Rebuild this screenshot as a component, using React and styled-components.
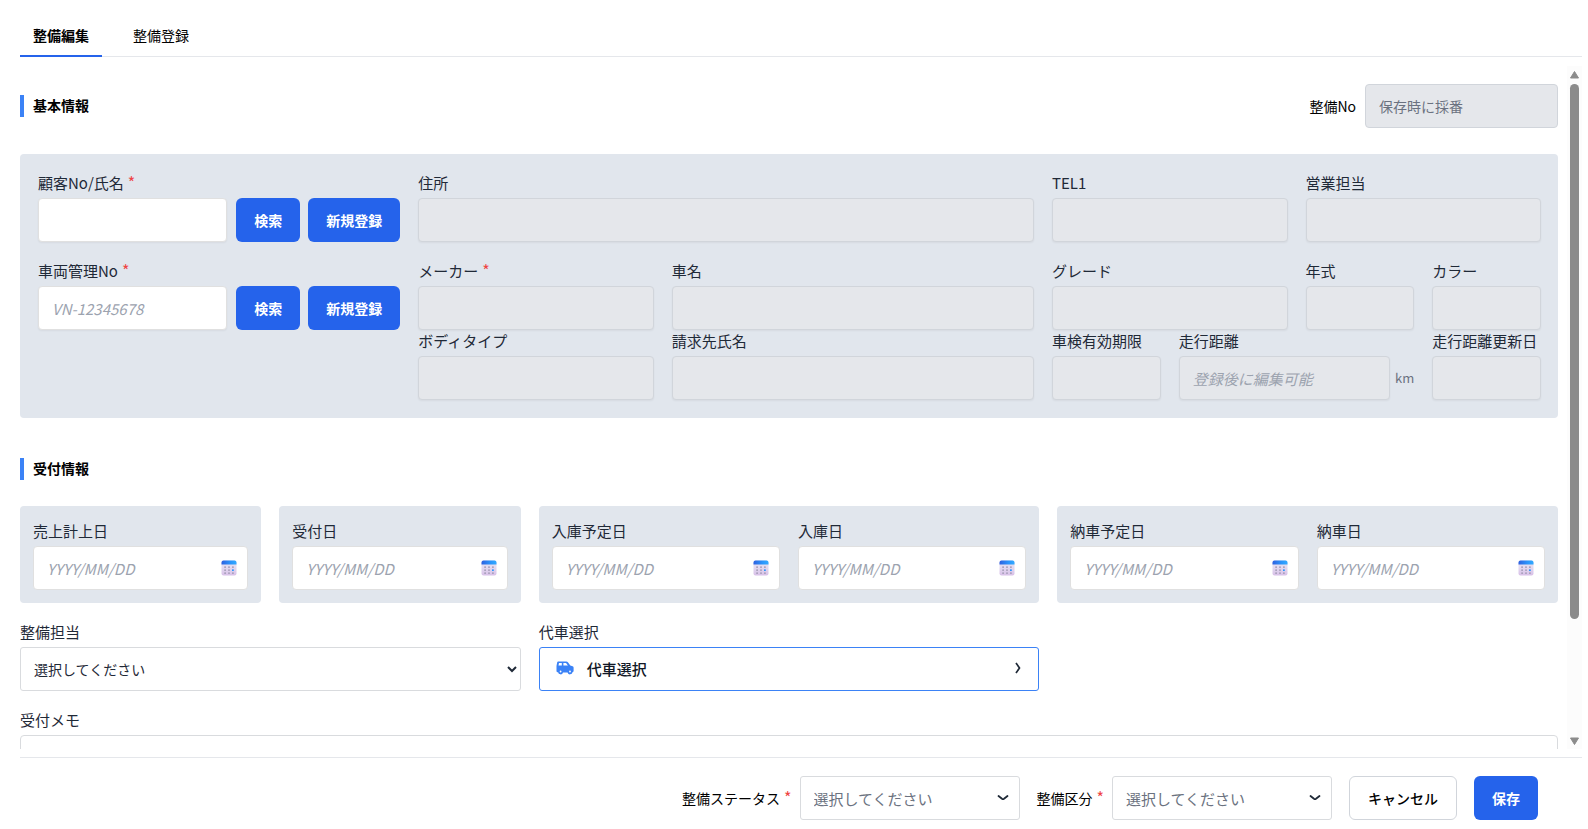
import React, { useEffect, useRef, useState } from "react";
import styled, { createGlobalStyle } from "styled-components";

const GlobalStyle = createGlobalStyle`
  * {
    box-sizing: border-box;
  }
  body {
    margin: 0;
    background: #fff;
    color: #000;
    font-family: "Noto Sans CJK JP", "Noto Sans", sans-serif;
    font-size: 14px;
    line-height: 22px;
  }
  button,
  input,
  select,
  textarea {
    font-family: inherit;
    font-size: inherit;
    color: inherit;
  }
`;

const Page = styled.main`
  height: 100vh;
  display: flex;
  flex-direction: column;
  padding: 17px 6px 0 20px;
`;

const Tabs = styled.nav`
  display: flex;
  gap: 18px;
  border-bottom: 1px solid #e5e7eb;
`;

const Tab = styled.button`
  margin-bottom: -1px;
  padding: 7px 13px 9px;
  border: none;
  border-bottom: 2px solid ${({ $active }) => ($active ? "#2563eb" : "transparent")};
  background: none;
  font-weight: ${({ $active }) => ($active ? 600 : 400)};
  line-height: 22px;
  cursor: pointer;
`;

const Body = styled.div`
  flex: 1;
  min-height: 0;
  display: flex;
  margin: 9px 0 8px;
`;

const Scroller = styled.div`
  flex: 1;
  min-width: 0;
  overflow-y: auto;
  scrollbar-width: none;
  padding: 18px 9px 18px 0;
`;

const Track = styled.div`
  width: 15px;
  display: flex;
  flex-direction: column;
  align-items: center;
  padding: 5px 0 4px;
  background: #fcfcfc;
  > svg {
    flex: none;
    display: block;
  }
`;

const Rail = styled.div`
  flex: 1;
  width: 9px;
  margin: 5px 0;
  > div {
    border-radius: 5px;
    background: #8b8b8b;
  }
`;

const SectionHeader = styled.div`
  display: flex;
  justify-content: space-between;
  align-items: center;
  margin-bottom: 26px;
  > h2 {
    margin: 0;
    padding: 0 0 2px 9px;
    border-left: 4px solid #3b82f6;
    font-size: 14px;
    font-weight: 600;
    line-height: 20px;
  }
`;

const NumberField = styled.div`
  display: flex;
  align-items: center;
  gap: 9px;
  > input {
    width: 193px;
    box-shadow: none;
    color: #6b7280;
    font-size: 14px;
    border-radius: 4px;
  }
`;

const BasicPanel = styled.div`
  display: grid;
  grid-template-columns: repeat(12, minmax(0, 1fr));
  column-gap: 18px;
  margin-bottom: 40px;
  padding: 18px 17px 18px 18px;
  border-radius: 4px;
  background: #e1e6ed;
`;

const FieldBox = styled.div`
  grid-column: ${({ $start }) => $start || "auto"} / span ${({ $span }) => $span || 1};
  margin-bottom: ${({ $gap }) => ($gap ? "18px" : 0)};
  min-width: 0;
`;

const Label = styled.label`
  display: block;
  margin-bottom: 4px;
  color: #1f2937;
  font-size: 15px;
  line-height: 22px;
  white-space: nowrap;
`;

const Required = styled.span`
  margin-left: 4px;
  color: #ef4444;
  font-size: 16px;
  line-height: 1;
`;

const TextInput = styled.input`
  width: 100%;
  min-width: 0;
  height: 44px;
  padding: 0 13px;
  border: 1px solid #e0e0e0;
  border-radius: 4px;
  background: #fff;
  box-shadow: 0 1px 2px rgba(0, 0, 0, 0.05);
  font-size: 15px;
  &:disabled {
    background: #e5e7eb;
    border-color: #d1d5db;
  }
  &::placeholder {
    color: #9ca3af;
    font-style: italic;
  }
`;

const InputRow = styled.div`
  display: flex;
  align-items: center;
  gap: ${({ $gap }) => $gap}px;
  > span {
    color: #6b7280;
    font-size: 13px;
  }
`;

const ButtonPair = styled.div`
  flex: none;
  display: flex;
  gap: 8px;
`;

const Button = styled.button`
  height: 44px;
  padding: 0 18px;
  border: ${({ $outline }) => ($outline ? "1px solid #d1d5db" : "none")};
  border-radius: 6px;
  background: ${({ $outline }) => ($outline ? "#fff" : "#2563eb")};
  color: ${({ $outline }) => ($outline ? "#000" : "#fff")};
  font-size: 14px;
  font-weight: ${({ $outline }) => ($outline ? 500 : 700)};
  white-space: nowrap;
  cursor: pointer;
`;

const ReceptionGrid = styled.div`
  display: grid;
  grid-template-columns: repeat(6, minmax(0, 1fr));
  gap: 18px;
`;

const DatePanel = styled.div`
  grid-column: span ${({ $span }) => $span};
  display: flex;
  gap: 18px;
  padding: 14px 13px 13px;
  border-radius: 4px;
  background: #e1e6ed;
  > div {
    flex: 1;
    min-width: 0;
  }
`;

const DateBox = styled.div`
  display: flex;
  align-items: center;
  height: 44px;
  padding: 0 10px 0 13px;
  border: 1px solid #e0e0e0;
  border-radius: 4px;
  background: #fff;
  > input {
    flex: 1;
    min-width: 0;
    padding: 0;
    border: none;
    outline: none;
    font-size: 15px;
    &::placeholder {
      color: #9ca3af;
      font-style: italic;
    }
  }
  > button {
    display: flex;
    padding: 0;
    border: none;
    background: none;
    cursor: pointer;
  }
`;

const StaffSelect = styled.select`
  width: 100%;
  height: 44px;
  padding: 0 0 0 9px;
  border: 1px solid #d9dbde;
  border-radius: 3px;
  background: #fff;
  color: #1f2937;
  font-size: 14px;
`;

const LoanCarButton = styled.button`
  width: 100%;
  height: 44px;
  display: flex;
  align-items: center;
  gap: 13px;
  padding: 0 16px 2px;
  border: 1px solid #3b82f6;
  border-radius: 3px;
  background: #fff;
  color: #111827;
  font-size: 15px;
  font-weight: 500;
  cursor: pointer;
  > span {
    flex: 1;
    text-align: left;
  }
`;

const Memo = styled.textarea`
  display: block;
  width: 100%;
  height: 140px;
  padding: 8px 13px;
  border: 1px solid #d9dbde;
  border-radius: 4px;
  resize: none;
`;

const Footer = styled.footer`
  display: flex;
  justify-content: flex-end;
  align-items: center;
  gap: 17px;
  padding: 18px 44px 9px 0;
  border-top: 1px solid #e5e7eb;
`;

const StatusField = styled.div`
  display: flex;
  align-items: center;
  gap: 8px;
`;

const SelectBox = styled.div`
  display: grid;
  align-items: center;
  > select,
  > svg {
    grid-area: 1 / 1;
  }
  > select {
    width: 220px;
    height: 44px;
    padding: 0 13px;
    border: 1px solid #d9dbde;
    border-radius: 3px;
    background: #fff;
    appearance: none;
    color: #6b7280;
    font-size: 15px;
  }
  > svg {
    justify-self: end;
    margin-right: 11px;
    pointer-events: none;
  }
`;

const CalendarIcon = () => (
  <svg width="16" height="16" viewBox="0 0 16 16" aria-hidden="true">
    <defs>
      <linearGradient id="cal_body" x1="0" y1="0" x2="0" y2="1">
        <stop offset="0.4" stopColor="#e4dcf1" />
        <stop offset="1" stopColor="#d8c0e8" />
      </linearGradient>
      <linearGradient id="cal_top" x1="0" y1="0" x2="1" y2="0">
        <stop offset="0" stopColor="#2f62e0" />
        <stop offset="0.6" stopColor="#2b95fb" />
        <stop offset="1" stopColor="#33aaff" />
      </linearGradient>
    </defs>
    <rect x="0.5" y="0.5" width="15" height="15" rx="2" fill="url(#cal_body)" />
    <path d="M2.5 0.5h11a2 2 0 0 1 2 2V4.5H0.5V2.5a2 2 0 0 1 2-2z" fill="url(#cal_top)" />
    {[6.2, 9.2, 12.2].map((y, row) =>
      [3.2, 7.1, 11].map((x, col) => (
        <rect
          key={`${row}-${col}`}
          x={x}
          y={y}
          width="1.8"
          height="1.8"
          rx="0.5"
          fill={row === 1 && col === 2 ? "#2b95fb" : "#aba1bd"}
        />
      ))
    )}
  </svg>
);

const CarIcon = () => (
  <svg width="18" height="14" viewBox="0 0 18 14" aria-hidden="true">
    <path
      fill="#3b82f6"
      fillRule="evenodd"
      d="M2.5 0.5H10.3C11 0.5 11.6 0.8 12.1 1.4L14.3 4.4L16.6 5.2C17.2 5.4 17.6 6 17.6 6.7V10C17.6 10.7 17.2 11.1 16.5 11.2A2.5 2.5 0 0 1 11.6 11.5H7A2.5 2.5 0 0 1 2.1 11.2C1.1 11.2 0.5 10.6 0.5 9.9V5L1.1 1.7C1.2 1 1.8 0.5 2.5 0.5zM3 2L2.5 4.6H5.8V2zM7.4 2V4.6H11.9L10.4 2.4C10.2 2.1 10 2 9.7 2zM4.6 9.6a0.9 0.9 0 1 0 0 1.8a0.9 0.9 0 0 0 0-1.8zM14 9.6a0.9 0.9 0 1 0 0 1.8a0.9 0.9 0 0 0 0-1.8z"
    />
  </svg>
);

const ChevronDown = () => (
  <svg width="12" height="8" viewBox="0 0 12 8" aria-hidden="true">
    <path
      d="M1.5 2L5 4.8Q6 5.5 7 4.8L10.5 2"
      fill="none"
      stroke="#1f2937"
      strokeWidth="1.8"
      strokeLinecap="round"
    />
  </svg>
);

const ChevronRight = () => (
  <svg width="8" height="12" viewBox="0 0 8 12" aria-hidden="true">
    <path d="M2 1L5.5 6L2 11" fill="none" stroke="#1f2937" strokeWidth="1.7" />
  </svg>
);

const Arrow = ({ down }) => (
  <svg width="9" height="8" viewBox="0 0 9 8" aria-hidden="true">
    <path
      d={down ? "M0.5 1H8.5L4.5 7.5z" : "M0.5 7H8.5L4.5 0.5z"}
      fill="#8b8b8b"
      stroke="#8b8b8b"
      strokeLinejoin="round"
    />
  </svg>
);

const Field = ({ id, label, required, span, start, gap, children }) => (
  <FieldBox $span={span} $start={start} $gap={gap}>
    <Label htmlFor={id}>
      {label}
      {required && <Required>*</Required>}
    </Label>
    {children || <TextInput id={id} disabled />}
  </FieldBox>
);

const SearchField = ({ id, placeholder }) => (
  <InputRow $gap={9}>
    <TextInput id={id} placeholder={placeholder} />
    <ButtonPair>
      <Button type="button">検索</Button>
      <Button type="button">新規登録</Button>
    </ButtonPair>
  </InputRow>
);

const DateField = ({ id, label }) => (
  <div>
    <Label htmlFor={id}>{label}</Label>
    <DateBox>
      <input id={id} placeholder="YYYY/MM/DD" />
      <button type="button" aria-label={label}>
        <CalendarIcon />
      </button>
    </DateBox>
  </div>
);

const StatusSelect = ({ id, label }) => (
  <StatusField>
    <label htmlFor={id}>
      {label}
      <Required>*</Required>
    </label>
    <SelectBox>
      <select id={id}>
        <option>選択してください</option>
      </select>
      <ChevronDown />
    </SelectBox>
  </StatusField>
);

const tabs = ["整備編集", "整備登録"];

const App = () => {
  const [tab, setTab] = useState(tabs[0]);
  const [thumb, setThumb] = useState({ size: 100, top: 0 });
  const scroller = useRef(null);

  const updateThumb = () => {
    const el = scroller.current;
    const size = (el.clientHeight / el.scrollHeight) * 100;
    setThumb({ size, top: (el.scrollTop / el.scrollHeight) * 100 });
  };

  useEffect(() => {
    updateThumb();
    window.addEventListener("resize", updateThumb);
    return () => window.removeEventListener("resize", updateThumb);
  }, []);

  return (
    <Page>
      <GlobalStyle />
      <Tabs>
        {tabs.map((name) => (
          <Tab key={name} type="button" $active={name === tab} onClick={() => setTab(name)}>
            {name}
          </Tab>
        ))}
      </Tabs>

      <Body>
        <Scroller ref={scroller} onScroll={updateThumb}>
          <SectionHeader>
            <h2>基本情報</h2>
            <NumberField>
              <label htmlFor="seibi_no">整備No</label>
              <TextInput id="seibi_no" disabled defaultValue="保存時に採番" />
            </NumberField>
          </SectionHeader>
          <BasicPanel>
            <Field id="customer" label="顧客No/氏名" required span={3} gap>
              <SearchField id="customer" />
            </Field>
            <Field id="address" label="住所" span={5} gap />
            <Field id="tel1" label="TEL1" span={2} gap />
            <Field id="sales" label="営業担当" span={2} gap />

            <Field id="vehicle" label="車両管理No" required span={3}>
              <SearchField id="vehicle" placeholder="VN-12345678" />
            </Field>
            <Field id="maker" label="メーカー" required span={2} />
            <Field id="car_name" label="車名" span={3} />
            <Field id="grade" label="グレード" span={2} />
            <Field id="year" label="年式" />
            <Field id="color" label="カラー" />

            <Field id="body_type" label="ボディタイプ" start={4} span={2} />
            <Field id="billing" label="請求先氏名" span={3} />
            <Field id="expiry" label="車検有効期限" />
            <Field id="mileage" label="走行距離" span={2}>
              <InputRow $gap={5}>
                <TextInput id="mileage" placeholder="登録後に編集可能" disabled />
                <span>km</span>
              </InputRow>
            </Field>
            <Field id="mileage_date" label="走行距離更新日" />
          </BasicPanel>

          <SectionHeader>
            <h2>受付情報</h2>
          </SectionHeader>
          <ReceptionGrid>
            <DatePanel $span={1}>
              <DateField id="sales_date" label="売上計上日" />
            </DatePanel>
            <DatePanel $span={1}>
              <DateField id="reception_date" label="受付日" />
            </DatePanel>
            <DatePanel $span={2}>
              <DateField id="in_plan" label="入庫予定日" />
              <DateField id="in_date" label="入庫日" />
            </DatePanel>
            <DatePanel $span={2}>
              <DateField id="out_plan" label="納車予定日" />
              <DateField id="out_date" label="納車日" />
            </DatePanel>

            <Field id="staff" label="整備担当" span={2}>
              <StaffSelect id="staff">
                <option>選択してください</option>
              </StaffSelect>
            </Field>
            <Field id="loan_car" label="代車選択" span={2}>
              <LoanCarButton id="loan_car" type="button">
                <CarIcon />
                <span>代車選択</span>
                <ChevronRight />
              </LoanCarButton>
            </Field>

            <Field id="memo" label="受付メモ" start={1} span={6}>
              <Memo id="memo" />
            </Field>
          </ReceptionGrid>
        </Scroller>
        <Track aria-hidden="true">
          <Arrow />
          <Rail>
            <div style={{ height: `${thumb.size}%`, transform: `translateY(${(thumb.top / thumb.size) * 100}%)` }} />
          </Rail>
          <Arrow down />
        </Track>
      </Body>

      <Footer>
        <StatusSelect id="status" label="整備ステータス" />
        <StatusSelect id="division" label="整備区分" />
        <Button type="button" $outline>
          キャンセル
        </Button>
        <Button type="button">保存</Button>
      </Footer>
    </Page>
  );
};

export default App;
